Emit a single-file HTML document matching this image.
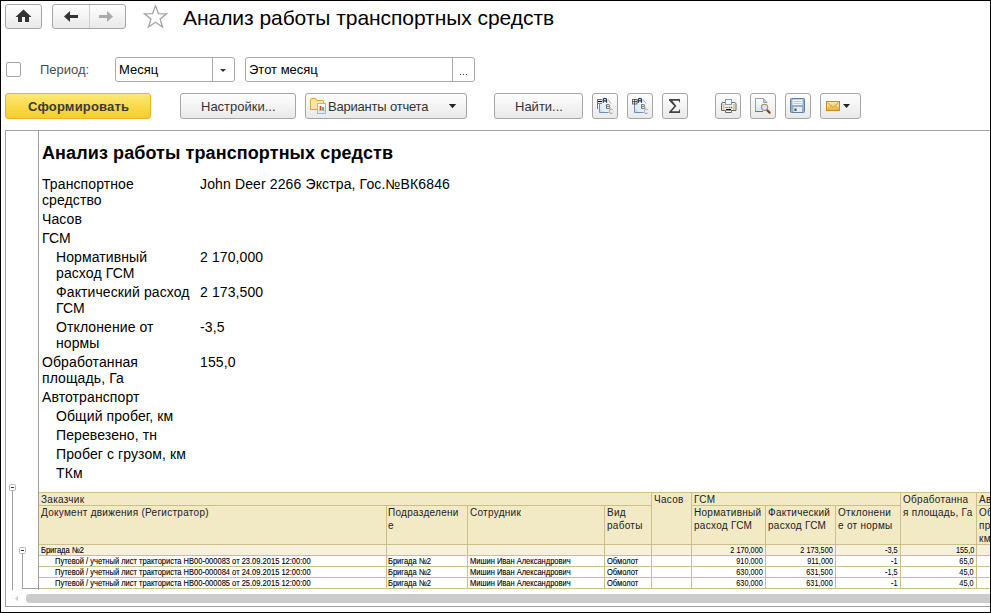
<!DOCTYPE html>
<html><head><meta charset="utf-8">
<style>
*{margin:0;padding:0;box-sizing:border-box}
html,body{width:991px;height:613px;overflow:hidden;background:#fff}
body{position:relative;font-family:"Liberation Sans",sans-serif;color:#000}
.a{position:absolute}
.win{left:0;top:0;width:991px;height:613px;border:1px solid #000}
.btn{position:absolute;border:1px solid #a6a6a6;border-radius:3px;background:linear-gradient(#fefefe,#e9e9e9);}
.t13{font-size:13px;line-height:15px;white-space:nowrap}
.inp{position:absolute;border:1px solid #a9a9a9;border-radius:3px;background:#fff}
.rep{font-size:14px;line-height:16px;letter-spacing:0.1px;white-space:nowrap;color:#000}
.hd{font-size:10px;line-height:13px;letter-spacing:0.28px;white-space:nowrap;color:#222}
.dt{font-size:8.5px;line-height:11px;white-space:nowrap;color:#000;transform:scaleX(0.885);transform-origin:0 0;-webkit-text-stroke:0.12px #000}
.dr{transform-origin:100% 0;transform:scaleX(0.86);-webkit-text-stroke:0.06px #000}
</style></head><body>

<!-- home -->
<div class="btn" style="left:5px;top:4px;width:37px;height:25px"></div>
<!-- nav -->
<div class="btn" style="left:52px;top:4px;width:74px;height:25px"></div>
<div class="a" style="left:89px;top:5px;width:1px;height:23px;background:#cfcfcf"></div>

<!-- title -->
<div class="a" style="left:183px;top:6px;font-size:21px;line-height:24px;letter-spacing:-0.05px;white-space:nowrap">Анализ работы транспортных средств</div>

<!-- period row -->
<div class="a" style="left:6px;top:62px;width:15px;height:15px;border:1px solid #a6a6a6;border-radius:2px;background:#fff"></div>
<div class="a t13" style="left:40px;top:62px;color:#4d4d4d">Период:</div>
<div class="inp" style="left:115px;top:57px;width:120px;height:25px"></div>
<div class="a" style="left:212px;top:58px;width:1px;height:23px;background:#a9a9a9"></div>
<div class="a t13" style="left:119px;top:62px">Месяц</div>
<div class="inp" style="left:245px;top:57px;width:230px;height:25px"></div>
<div class="a" style="left:452px;top:58px;width:1px;height:23px;background:#a9a9a9"></div>
<div class="a t13" style="left:249px;top:62px">Этот месяц</div>

<!-- buttons row -->
<div class="btn" style="left:5px;top:93px;width:146px;height:26px;border-color:#ecb51f;background:linear-gradient(#fde976,#f7cc26)"></div>
<div class="a t13" style="left:28px;top:99px;font-weight:bold;color:#3a3a3a;letter-spacing:0.18px">Сформировать</div>
<div class="btn" style="left:180px;top:93px;width:116px;height:26px"></div>
<div class="a t13" style="left:201px;top:99px;color:#333">Настройки...</div>
<div class="btn" style="left:305px;top:93px;width:162px;height:26px"></div>
<div class="a t13" style="left:328px;top:99px;color:#333;letter-spacing:-0.2px">Варианты отчета</div>
<div class="btn" style="left:494px;top:93px;width:89px;height:26px"></div>
<div class="a t13" style="left:515px;top:99px;color:#333">Найти...</div>
<div class="btn" style="left:592px;top:93px;width:26px;height:26px"></div>
<div class="btn" style="left:627px;top:93px;width:26px;height:26px"></div>
<div class="btn" style="left:662px;top:93px;width:26px;height:26px"></div>
<div class="btn" style="left:715px;top:93px;width:26px;height:26px"></div>
<div class="btn" style="left:750px;top:93px;width:26px;height:26px"></div>
<div class="btn" style="left:785px;top:93px;width:26px;height:26px"></div>
<div class="btn" style="left:820px;top:93px;width:41px;height:26px"></div>


<!-- home icon -->
<svg class="a" style="left:0;top:0" width="991" height="130" viewBox="0 0 991 130">
 <path d="M15.5 17 L23.5 9.5 L31.5 17 Z" fill="#333"/>
 <rect x="18" y="16.5" width="4" height="5.5" fill="#333"/>
 <rect x="25" y="16.5" width="4" height="5.5" fill="#333"/>
 <!-- back arrow -->
 <path d="M64 16.5 L70 11 L70 22 Z" fill="#333"/>
 <rect x="69" y="15" width="9" height="3" fill="#333"/>
 <!-- fwd arrow -->
 <path d="M113 16.5 L107 11 L107 22 Z" fill="#aaa"/>
 <rect x="99" y="15" width="9" height="3" fill="#aaa"/>
 <!-- star -->
 <path d="M155.5 5.8 L158.4 13.6 L166.6 13.8 L160.1 19.0 L162.5 27.0 L155.5 22.3 L148.5 27.0 L150.9 19.0 L144.4 13.8 L152.6 13.6 Z" fill="none" stroke="#a3a3a3" stroke-width="1.3" stroke-linejoin="miter"/>
 <!-- input dropdown arrow -->
 <path d="M220 69 L226 69 L223 72 Z" fill="#333"/>
 <!-- ellipsis -->
 <rect x="460" y="74" width="1" height="1" fill="#444"/><rect x="463" y="74" width="1" height="1" fill="#444"/><rect x="466" y="74" width="1" height="1" fill="#444"/>
 <!-- variants folder icon -->
 <path d="M310.5 109.5 L310.5 99.5 Q310.5 98.5 311.5 98.5 L315.5 98.5 L316.8 100.5 L322.5 100.5 Q323.5 100.5 323.5 101.5 L323.5 109.5 Z" fill="#f7e7a4" stroke="#d4a634" stroke-width="1"/>
 <rect x="317.5" y="103.5" width="8" height="10" fill="url(#pg)" stroke="#a5b8cc" stroke-width="1"/>
 <rect x="319.7" y="106" width="1.6" height="4.2" fill="#e53b2b"/><rect x="319" y="110.2" width="6" height="0.7" fill="#a8a8a8"/>
 <rect x="322.2" y="107" width="1.6" height="3.2" fill="#3aa63a"/>
 <!-- variants dropdown arrow -->
 <path d="M448.8 104 L456.2 104 L452.5 108.2 Z" fill="#222"/>
 <!-- mail dropdown arrow -->
 <path d="M843 104 L850 104 L846.5 108 Z" fill="#222"/>
 <!-- sigma -->
 <path d="M669 99 L680 99 L680 103 L678.6 100.8 L672.3 100.8 L676.4 106 L671.8 111.2 L678.6 111.2 L680 108.8 L680 113 L669 113 L669 111.9 L674.3 106 L669 100.4 Z" fill="#444"/>
 <!-- collapse icon 1 -->
<g transform="translate(0,0)"><path d="M599.5 103.5 L599.5 112.5 L608.5 112.5" fill="none" stroke="#6d8fb5" stroke-width="1"/><path d="M600 104 L606 104 L609 108 L608 112 L600 112 Z" fill="#e3eef9"/><path d="M600 108 L604 112 L600 112 Z" fill="#c9dcf1"/><line x1="597" y1="99.5" x2="602" y2="99.5" stroke="#777" stroke-width="1"/><line x1="597" y1="101.5" x2="602" y2="101.5" stroke="#111" stroke-width="1.2"/><line x1="597" y1="103.5" x2="602" y2="103.5" stroke="#888" stroke-width="1"/><line x1="597.5" y1="99" x2="597.5" y2="109" stroke="#777" stroke-width="1"/><path d="M603.3 102.8 L603.3 99.6 Q603.3 98.3 604.9 98.3 Q606.5 98.3 606.5 99.6 L606.5 102.8 M603.3 100.9 L606.5 100.9" fill="none" stroke="#1b3f66" stroke-width="1.3"/><path d="M608 99.5 L611 103.5" stroke="#8fb3d9" stroke-width="1"/><path d="M606.5 104.5 L606.5 108.5 L609 108.5 Q610 108.5 610 107.4 Q610 106.4 608.8 106.4 L606.5 106.4 M606.5 104.5 L608.6 104.5 Q609.6 104.5 609.6 105.4 Q609.6 106.4 608.6 106.4" fill="none" stroke="#666" stroke-width="0.9"/><path d="M612.8 109.8 Q612 109 611 109 Q609.4 109 609.4 111.3 Q609.4 113.6 611 113.6 Q612 113.6 612.8 112.8" fill="none" stroke="#999" stroke-width="0.9"/></g>
<g transform="translate(35,0)"><path d="M599.5 103.5 L599.5 112.5 L608.5 112.5" fill="none" stroke="#6d8fb5" stroke-width="1"/><path d="M600 104 L606 104 L609 108 L608 112 L600 112 Z" fill="#e3eef9"/><path d="M600 108 L604 112 L600 112 Z" fill="#c9dcf1"/><rect x="597.5" y="99.5" width="4.5" height="4.5" fill="#fff" stroke="#555" stroke-width="0.8"/><line x1="597.2" y1="101.7" x2="602.3" y2="101.7" stroke="#222" stroke-width="0.8"/><line x1="599.7" y1="99.2" x2="599.7" y2="104.3" stroke="#222" stroke-width="0.8"/><path d="M603.3 102.8 L603.3 99.6 Q603.3 98.3 604.9 98.3 Q606.5 98.3 606.5 99.6 L606.5 102.8 M603.3 100.9 L606.5 100.9" fill="none" stroke="#1b3f66" stroke-width="1.3"/><path d="M608 99.5 L611 103.5" stroke="#8fb3d9" stroke-width="1"/><path d="M606.5 104.5 L606.5 108.5 L609 108.5 Q610 108.5 610 107.4 Q610 106.4 608.8 106.4 L606.5 106.4 M606.5 104.5 L608.6 104.5 Q609.6 104.5 609.6 105.4 Q609.6 106.4 608.6 106.4" fill="none" stroke="#666" stroke-width="0.9"/><path d="M612.8 109.8 Q612 109 611 109 Q609.4 109 609.4 111.3 Q609.4 113.6 611 113.6 Q612 113.6 612.8 112.8" fill="none" stroke="#999" stroke-width="0.9"/></g>
 <!-- printer -->
 <g>
  <path d="M721.5 110.5 L721.5 104 Q721.5 102.5 723 102.5 L734.5 102.5 Q736 102.5 736 104 L736 110.5 Z" fill="#f4f1ec" stroke="#6a6a6a" stroke-width="1"/>
  <rect x="722.5" y="104" width="2" height="6" fill="#d9c7ad"/>
  <rect x="733" y="104" width="2" height="6" fill="#d8c9a8"/>
  <rect x="725.5" y="99.5" width="6" height="5" fill="#fbfcfe" stroke="#7f9cc0" stroke-width="1"/>
  <rect x="725" y="107" width="3" height="1" fill="#9a9a60"/>
  <rect x="728.8" y="106.8" width="1.4" height="1.4" fill="#e52e2e"/>
  <rect x="730.9" y="106.8" width="1.4" height="1.4" fill="#2e9a2e"/>
  <rect x="726" y="109" width="5" height="1.8" fill="#111"/>
  <path d="M725.5 110.5 L725.5 112.5 L731.5 112.5 L731.5 110.5" fill="#fff" stroke="#6a6a6a" stroke-width="1"/>
 </g>
 <!-- preview -->
 <defs><linearGradient id="pg" x1="0" y1="0" x2="0" y2="1"><stop offset="0" stop-color="#ffffff"/><stop offset="1" stop-color="#d6e4f2"/></linearGradient></defs>
 <g>
  <path d="M755.5 98.5 L763.5 98.5 L767 102 L767 111.5 L755.5 111.5 Z" fill="url(#pg)"/>
  <path d="M755.5 111.5 L755.5 98.5 L763.5 98.5" fill="none" stroke="#8aa4c4" stroke-width="1"/>
  <path d="M755 111.5 L763 111.5" stroke="#5a78a0" stroke-width="1"/>
  <path d="M763.5 98.5 L763.5 102.5 L767.2 102.5 Z" fill="#b9d0ea" stroke="#6d8fb8" stroke-width="0.7"/>
  <line x1="766.5" y1="109.5" x2="769.6" y2="112.6" stroke="#7a4a1e" stroke-width="2.2" stroke-linecap="round"/>
  <circle cx="764.6" cy="107.3" r="3.1" fill="#d4e4fb" stroke="#b08a60" stroke-width="1.1"/>
 </g>
 <!-- save -->
 <g>
  <rect x="790.5" y="98.5" width="14" height="14" rx="1" fill="#92b1cf" stroke="#60809f" stroke-width="1"/>
  <rect x="792.5" y="99.5" width="10" height="5.5" fill="#f2f5f8"/>
  <rect x="793.5" y="101" width="8" height="0.8" fill="#a9c0d6"/>
  <rect x="793.5" y="103" width="8" height="0.8" fill="#a9c0d6"/>
  <rect x="793.5" y="107" width="8.5" height="5" fill="#e9ecef"/>
  <rect x="794.5" y="108.5" width="2" height="2.5" fill="#2f557d"/>
 </g>
 <!-- mail -->
 <defs><linearGradient id="mg" x1="0" y1="0" x2="0" y2="1"><stop offset="0" stop-color="#fbeea0"/><stop offset="1" stop-color="#eab545"/></linearGradient></defs>
 <g>
  <rect x="826.5" y="101.5" width="13" height="9" fill="url(#mg)" stroke="#cc8a1c" stroke-width="1"/>
  <path d="M827.5 102.5 L833 107.5 L838.5 102.5" fill="none" stroke="#c98e2a" stroke-width="0.8"/>
  <path d="M827.5 109.5 L831.5 106 M838.5 109.5 L834.5 106" fill="none" stroke="#d09a38" stroke-width="0.7"/>
 </g>
</svg>

<!-- report panel -->
<div class="a" style="left:5px;top:130px;width:990px;height:477px;border:1px solid #a0a0a0"></div>
<div class="a" style="left:38px;top:131px;width:1px;height:459px;background:#a0a0a0"></div>

<div class="a" style="left:42px;top:143px;font-size:18px;line-height:21px;font-weight:bold;letter-spacing:0.1px;white-space:nowrap">Анализ работы транспортных средств</div>

<!-- report rows -->
<div class="a rep" style="left:42px;top:176px">Транспортное<br>средство</div>
<div class="a rep" style="left:200px;top:176px;letter-spacing:0.13px">John Deer 2266 Экстра, Гос.№ВК6846</div>
<div class="a rep" style="left:42px;top:211px">Часов</div>
<div class="a rep" style="left:42px;top:230px">ГСМ</div>
<div class="a rep" style="left:56px;top:249px">Нормативный<br>расход ГСМ</div>
<div class="a rep" style="left:200px;top:249px">2 170,000</div>
<div class="a rep" style="left:56px;top:284px">Фактический расход<br>ГСМ</div>
<div class="a rep" style="left:200px;top:284px">2 173,500</div>
<div class="a rep" style="left:56px;top:319px">Отклонение от<br>нормы</div>
<div class="a rep" style="left:200px;top:319px">-3,5</div>
<div class="a rep" style="left:42px;top:354px">Обработанная<br>площадь, Га</div>
<div class="a rep" style="left:200px;top:354px">155,0</div>
<div class="a rep" style="left:42px;top:389px">Автотранспорт</div>
<div class="a rep" style="left:56px;top:408px">Общий пробег, км</div>
<div class="a rep" style="left:56px;top:427px">Перевезено, тн</div>
<div class="a rep" style="left:56px;top:446px">Пробег с грузом, км</div>
<div class="a rep" style="left:56px;top:465px">ТКм</div>
<!-- table -->
<div class="a" style="left:39px;top:492px;width:951px;height:53px;background:#f2e9c5"></div>
<div class="a" style="left:39px;top:545px;width:951px;height:10px;background:#f7f1dc"></div>
<div class="a" style="left:39px;top:492px;width:951px;height:1px;background:#cdbf8c"></div>
<div class="a" style="left:39px;top:505px;width:613px;height:1px;background:#cdbf8c"></div>
<div class="a" style="left:691px;top:505px;width:210px;height:1px;background:#cdbf8c"></div>
<div class="a" style="left:976px;top:505px;width:14px;height:1px;background:#cdbf8c"></div>
<div class="a" style="left:39px;top:544px;width:951px;height:1px;background:#cdbf8c"></div>
<div class="a" style="left:39px;top:555px;width:951px;height:1px;background:#cdbf8c"></div>
<div class="a" style="left:39px;top:566px;width:951px;height:1px;background:#cdbf8c"></div>
<div class="a" style="left:39px;top:577px;width:951px;height:1px;background:#cdbf8c"></div>
<div class="a" style="left:39px;top:588px;width:951px;height:1px;background:#cdbf8c"></div>
<div class="a" style="left:386px;top:505px;width:1px;height:84px;background:#cdbf8c"></div>
<div class="a" style="left:467px;top:505px;width:1px;height:84px;background:#cdbf8c"></div>
<div class="a" style="left:604px;top:505px;width:1px;height:84px;background:#cdbf8c"></div>
<div class="a" style="left:765px;top:505px;width:1px;height:84px;background:#cdbf8c"></div>
<div class="a" style="left:835px;top:505px;width:1px;height:84px;background:#cdbf8c"></div>
<div class="a" style="left:651px;top:492px;width:1px;height:97px;background:#cdbf8c"></div>
<div class="a" style="left:691px;top:492px;width:1px;height:97px;background:#cdbf8c"></div>
<div class="a" style="left:900px;top:492px;width:1px;height:97px;background:#cdbf8c"></div>
<div class="a" style="left:976px;top:492px;width:1px;height:97px;background:#cdbf8c"></div>
<div class="a hd" style="left:41px;top:493px">Заказчик</div>
<div class="a hd" style="left:654px;top:493px">Часов</div>
<div class="a hd" style="left:694px;top:493px">ГСМ</div>
<div class="a hd" style="left:903px;top:493px">Обработанна<br>я площадь, Га</div>
<div class="a hd" style="left:979px;top:493px">Ав</div>
<div class="a hd" style="left:41px;top:506px">Документ движения (Регистратор)</div>
<div class="a hd" style="left:388px;top:506px">Подразделени<br>е</div>
<div class="a hd" style="left:470px;top:506px">Сотрудник</div>
<div class="a hd" style="left:607px;top:506px">Вид<br>работы</div>
<div class="a hd" style="left:694px;top:506px">Нормативный<br>расход ГСМ</div>
<div class="a hd" style="left:768px;top:506px">Фактический<br>расход ГСМ</div>
<div class="a hd" style="left:838px;top:506px">Отклонени<br>е от нормы</div>
<div class="a hd" style="left:979px;top:506px">Об<br>пр<br>км</div>
<div class="a dt" style="left:41px;top:545px">Бригада №2</div>
<div class="a dt dr" style="right:228px;top:545px;text-align:right">2 170,000</div>
<div class="a dt dr" style="right:158px;top:545px;text-align:right">2 173,500</div>
<div class="a dt dr" style="right:93px;top:545px;text-align:right">-3,5</div>
<div class="a dt dr" style="right:17px;top:545px;text-align:right">155,0</div>
<div class="a dt" style="left:55px;top:556px">Путевой / учетный лист тракториста НВ00-000083 от 23.09.2015 12:00:00</div>
<div class="a dt" style="left:388px;top:556px">Бригада №2</div>
<div class="a dt" style="left:470px;top:556px">Мишин Иван Александрович</div>
<div class="a dt" style="left:607px;top:556px">Обмолот</div>
<div class="a dt dr" style="right:228px;top:556px;text-align:right">910,000</div>
<div class="a dt dr" style="right:158px;top:556px;text-align:right">911,000</div>
<div class="a dt dr" style="right:93px;top:556px;text-align:right">-1</div>
<div class="a dt dr" style="right:17px;top:556px;text-align:right">65,0</div>
<div class="a dt" style="left:55px;top:567px">Путевой / учетный лист тракториста НВ00-000084 от 24.09.2015 12:00:00</div>
<div class="a dt" style="left:388px;top:567px">Бригада №2</div>
<div class="a dt" style="left:470px;top:567px">Мишин Иван Александрович</div>
<div class="a dt" style="left:607px;top:567px">Обмолот</div>
<div class="a dt dr" style="right:228px;top:567px;text-align:right">630,000</div>
<div class="a dt dr" style="right:158px;top:567px;text-align:right">631,500</div>
<div class="a dt dr" style="right:93px;top:567px;text-align:right">-1,5</div>
<div class="a dt dr" style="right:17px;top:567px;text-align:right">45,0</div>
<div class="a dt" style="left:55px;top:578px">Путевой / учетный лист тракториста НВ00-000085 от 25.09.2015 12:00:00</div>
<div class="a dt" style="left:388px;top:578px">Бригада №2</div>
<div class="a dt" style="left:470px;top:578px">Мишин Иван Александрович</div>
<div class="a dt" style="left:607px;top:578px">Обмолот</div>
<div class="a dt dr" style="right:228px;top:578px;text-align:right">630,000</div>
<div class="a dt dr" style="right:158px;top:578px;text-align:right">631,000</div>
<div class="a dt dr" style="right:93px;top:578px;text-align:right">-1</div>
<div class="a dt dr" style="right:17px;top:578px;text-align:right">45,0</div>
<svg class="a" style="left:0;top:470px" width="60" height="130" viewBox="0 470 60 130">
 <rect x="9.5" y="484.5" width="6" height="6" rx="1" fill="#fff" stroke="#b4b4b4" stroke-width="1"/>
 <rect x="11" y="487" width="3" height="1" fill="#333"/>
 <rect x="12" y="491" width="1" height="99" fill="#a0a0a0"/>
 <rect x="19.5" y="547.5" width="6" height="6" rx="1" fill="#fff" stroke="#b4b4b4" stroke-width="1"/>
 <rect x="21" y="550" width="3" height="1" fill="#333"/>
 <rect x="22" y="554" width="1" height="35" fill="#a0a0a0"/>
 <rect x="22" y="588" width="16" height="1" fill="#a0a0a0"/>
</svg>
<svg class="a" style="left:0;top:590px" width="991" height="20" viewBox="0 590 991 20">
 <path d="M15 598.5 L18 595.5 L18 601.5 Z" fill="#d0d0d0"/>
 <rect x="26" y="594" width="975" height="9" rx="3.5" fill="#cbcbcb"/>
</svg>
<div class="a win"></div>
</body></html>
